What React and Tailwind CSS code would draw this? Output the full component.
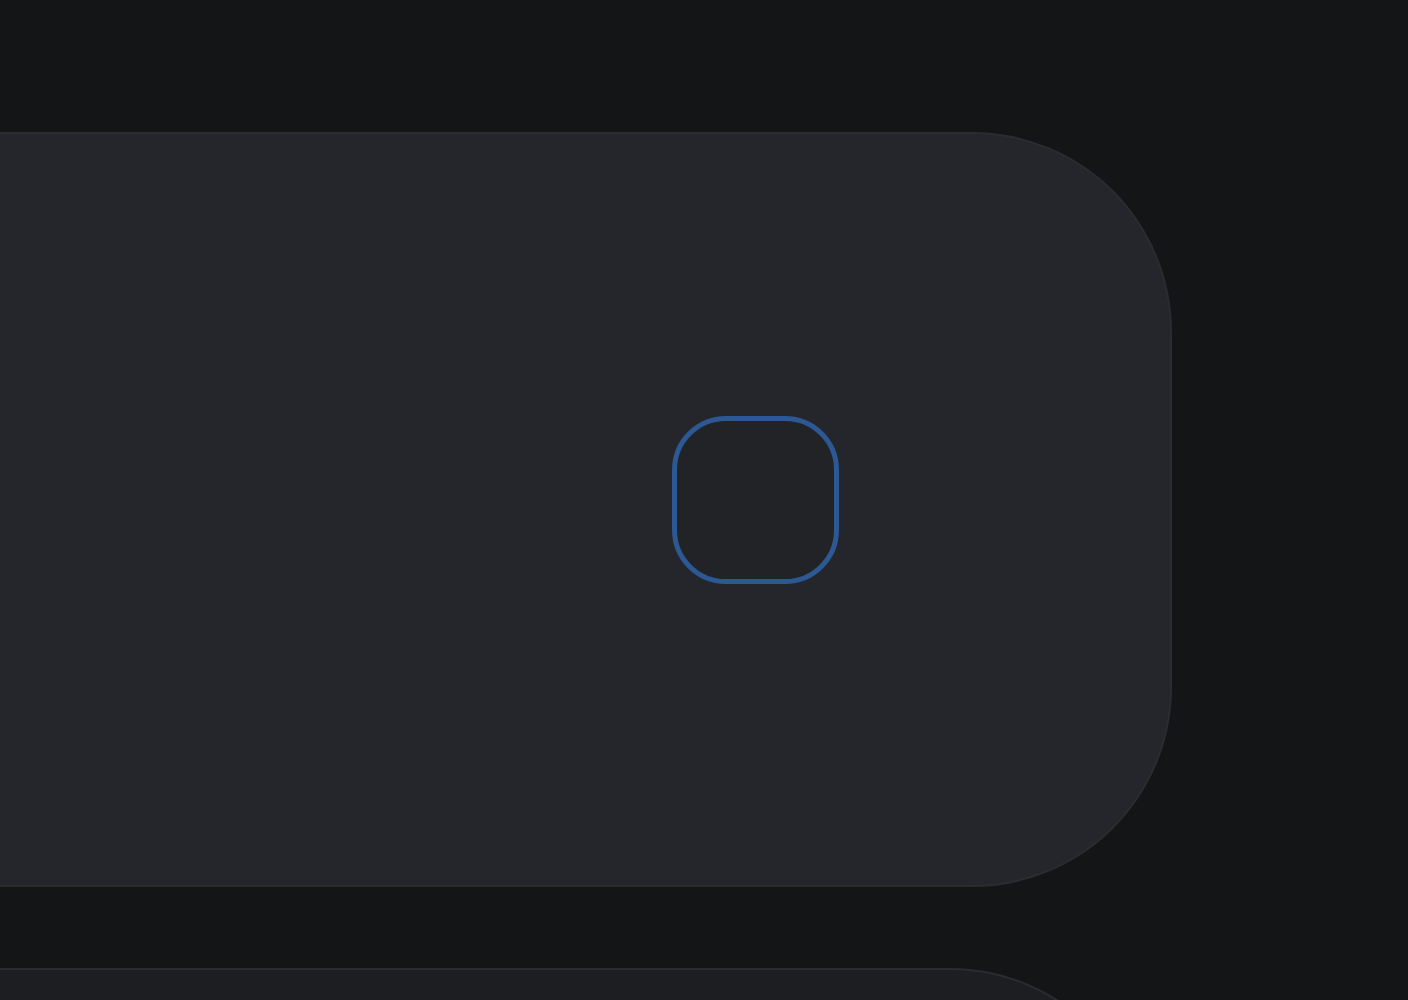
export default function App() {
  return (
    <div className="w-full h-[1000px] overflow-hidden bg-[#141517] flex flex-col">
      <div className="mt-[132px] w-[1172px] h-[755px] shrink-0 rounded-r-[200px] border-2 border-l-0 border-[#2b2c30] bg-[#25262b] flex items-center pl-[672px] pb-[20px]">
        <div className="w-[167px] h-[168px] rounded-[54px] border-[5px] border-[#2c5894] bg-[#222327]" />
      </div>
      <div className="mt-[81px] w-[1150px] h-[200px] shrink-0 rounded-tr-[200px] border-2 border-l-0 border-[#2b2c30] bg-[#1d1e21]" />
    </div>
  );
}
